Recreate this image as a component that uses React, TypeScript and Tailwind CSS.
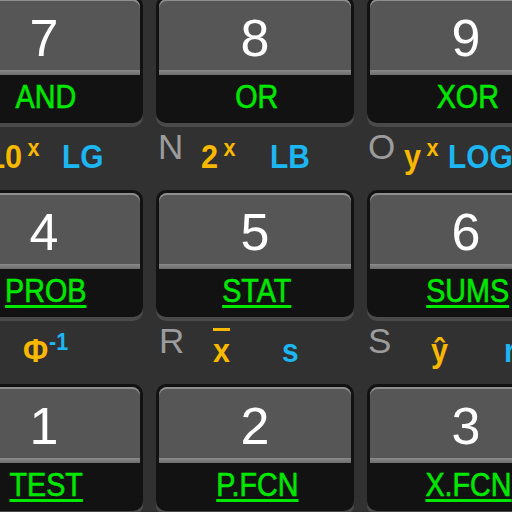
import type { ReactNode } from "react";

type Cell = {
  digit: string;
  fn: string;
  under?: boolean;
  grey?: string;
  pl?: string;
  gw?: string;
  ow?: string;
  orange?: ReactNode;
  blue?: ReactNode;
};

const Sup = ({ children, color }: { children: ReactNode; color: string }) => (
  <span className={`text-[24px] leading-[0] align-[12px] ${color}`}>{children}</span>
);

const rows: Cell[][] = [
  [
    {
      digit: "7",
      fn: "AND",
      grey: "M",
      pl: "pl-[2px]",
      gw: "w-[41px]",
      ow: "w-[74px]",
      orange: (
        <>
          10<Sup color="ml-[6px] text-[#f9b800]">x</Sup>
        </>
      ),
      blue: "LG",
    },
    {
      digit: "8",
      fn: "OR",
      grey: "N",
      pl: "pl-[2px]",
      gw: "w-[43px]",
      ow: "w-[69px]",
      orange: (
        <>
          2<Sup color="ml-[6px] text-[#f9b800]">x</Sup>
        </>
      ),
      blue: "LB",
    },
    {
      digit: "9",
      fn: "XOR",
      grey: "O",
      pl: "pl-[1px]",
      gw: "w-[36px]",
      ow: "w-[44px]",
      orange: (
        <>
          y<Sup color="ml-[6px] text-[#f9b800]">x</Sup>
        </>
      ),
      blue: "LOG",
    },
  ],
  [
    {
      digit: "4",
      fn: "PROB",
      under: true,
      grey: "Q",
      pl: "pl-[2px]",
      gw: "w-[76px]",
      ow: "w-[60px]",
      orange: (
        <>
          Φ<Sup color="ml-[1px] text-[#1cb6f2]">-1</Sup>
        </>
      ),
    },
    {
      digit: "5",
      fn: "STAT",
      under: true,
      grey: "R",
      pl: "pl-[3px]",
      gw: "w-[54px]",
      ow: "w-[69px]",
      orange: <span className="overline decoration-[3px]">x</span>,
      blue: "s",
    },
    {
      digit: "6",
      fn: "SUMS",
      under: true,
      grey: "S",
      pl: "pl-[1px]",
      gw: "w-[63px]",
      ow: "w-[73px]",
      orange: "ŷ",
      blue: "r",
    },
  ],
  [
    { digit: "1", fn: "TEST", under: true },
    { digit: "2", fn: "P.FCN", under: true },
    { digit: "3", fn: "X.FCN", under: true },
  ],
];

function Key({ cell }: { cell: Cell }) {
  return (
    <div className="w-[198px] shrink-0">
      <div className="h-[127px] rounded-[10px] bg-[#121212] px-[3px] pt-[3px] shadow-[0_4px_0_#4a4a4a]">
        <div className="h-[71px] rounded-t-[8px] bg-[#565656] shadow-[inset_0_2px_0_#8e8e8e] flex justify-center pt-[13px]">
          <span className="text-[52px] leading-[52px] text-white">{cell.digit}</span>
        </div>
        <div className="h-[5px] bg-gradient-to-b from-[#8a8a8a] to-[#6c6c6c]" />
        <div className="flex justify-center pt-[5px] pl-[4px]">
          <span
            className={`inline-block scale-x-[0.87] text-[33px] leading-[33px] text-[#00e800] [-webkit-text-stroke:0.6px_#00e800] ${
              cell.under ? "underline decoration-[3px] underline-offset-[3px]" : ""
            }`}
          >
            {cell.fn}
          </span>
        </div>
      </div>
      <div className={`flex items-start h-[67px] ${cell.pl ?? ""}`}>
        <div className={`shrink-0 mt-[6px] text-[35px] leading-[35px] text-[#9c9c9c] ${cell.gw ?? ""}`}>
          {cell.grey}
        </div>
        <div className={`shrink-0 mt-[16px] text-[34px] leading-[34px] font-bold text-[#f9b800] whitespace-nowrap ${cell.ow ?? ""}`}>
          <span className="inline-block scale-x-[0.9] origin-left">{cell.orange}</span>
        </div>
        <div className="shrink-0 mt-[16px] text-[34px] leading-[34px] font-bold text-[#1cb6f2] whitespace-nowrap">
          <span className="inline-block scale-x-[0.88] origin-left">{cell.blue}</span>
        </div>
      </div>
    </div>
  );
}

export default function App() {
  return (
    <div
      className="w-[512px] h-[512px] overflow-hidden bg-[#313131]"
      style={{ fontFamily: '"Liberation Sans", Arial, sans-serif' }}
    >
      <div className="flex flex-col ml-[-55px] mt-[-4px]">
        {rows.map((row, i) => (
          <div key={i} className="flex gap-[13px]">
            {row.map((cell) => (
              <Key key={cell.digit} cell={cell} />
            ))}
          </div>
        ))}
      </div>
    </div>
  );
}
